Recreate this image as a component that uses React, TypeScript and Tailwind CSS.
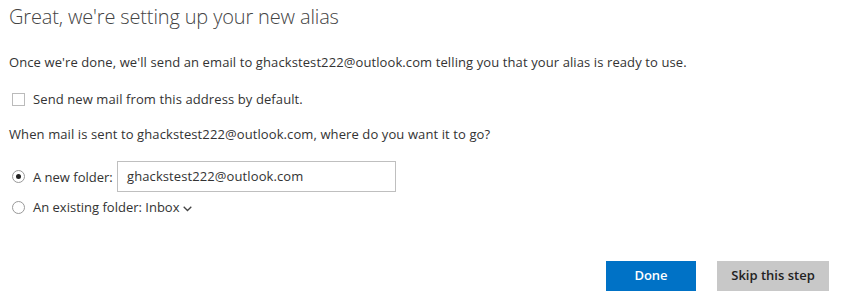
import React from 'react'

const font = { fontFamily: '"Open Sans", "Noto Sans", sans-serif' }

export default function App() {
  return (
    <div className="w-[842px] h-[298px] bg-white text-[#333] overflow-hidden" style={font}>
      <div className="flex flex-col pl-[9px] pr-[13px] h-full">

        {/* Header */}
        <h1 className="mt-[3px] h-[28px] text-[20px] leading-[28px] font-light text-[#444] tracking-[-0.15px]">
          Great, we're setting up your new alias
        </h1>

        <p className="mt-[22px] h-[18px] text-[13px] leading-[18px] tracking-[0.1px]">
          Once we're done, we'll send an email to ghackstest222@outlook.com telling you that your alias is ready to use.
        </p>

        {/* Checkbox */}
        <label className="mt-[18px] h-[20px] flex items-center">
          <span className="ml-[3px] w-[13px] h-[13px] border border-[#bbb] bg-white" />
          <span className="ml-[8px] text-[13px] leading-[18px] tracking-[0.1px]">Send new mail from this address by default.</span>
        </label>

        <p className="mt-[16px] h-[18px] text-[13px] leading-[18px] tracking-[0.1px]">
          When mail is sent to ghackstest222@outlook.com, where do you want it to go?
        </p>

        {/* Radios */}
        <div className="mt-[18px] h-[31px] flex items-center">
          <span className="ml-[3px] w-[13px] h-[13px] rounded-full border border-[#999] flex items-center justify-center">
            <span className="w-[5px] h-[5px] rounded-full bg-[#222]" />
          </span>
          <span className="ml-[8px] w-[84px] text-[13px] leading-[18px]">A new folder:</span>
          <div className="w-[279px] h-[31px] border border-[#bfbfbf] flex items-center pl-[9px] text-[13px] tracking-[0.1px]">
            ghackstest222@outlook.com
          </div>
        </div>

        <div className="mt-[5px] h-[20px] flex items-center">
          <span className="ml-[3px] w-[13px] h-[13px] rounded-full border border-[#999]" />
          <span className="ml-[8px] text-[13px] leading-[18px]">An existing folder: Inbox</span>
          <svg className="ml-[3px] mt-[3px]" width="9" height="6" viewBox="0 0 9 6" fill="none">
            <path d="M0.7 0.7 L4.5 4.5 L8.3 0.7" stroke="#444" strokeWidth="1.3" />
          </svg>
        </div>

        {/* Actions */}
        <div className="mt-auto mb-[7px] flex justify-end gap-[21px]">
          <button className="w-[90px] h-[30px] bg-[#0072c6] text-white text-[13px] font-semibold">Done</button>
          <button className="w-[112px] h-[30px] bg-[#c8c8c8] text-[#222] text-[13px] font-semibold">Skip this step</button>
        </div>

      </div>
    </div>
  )
}
